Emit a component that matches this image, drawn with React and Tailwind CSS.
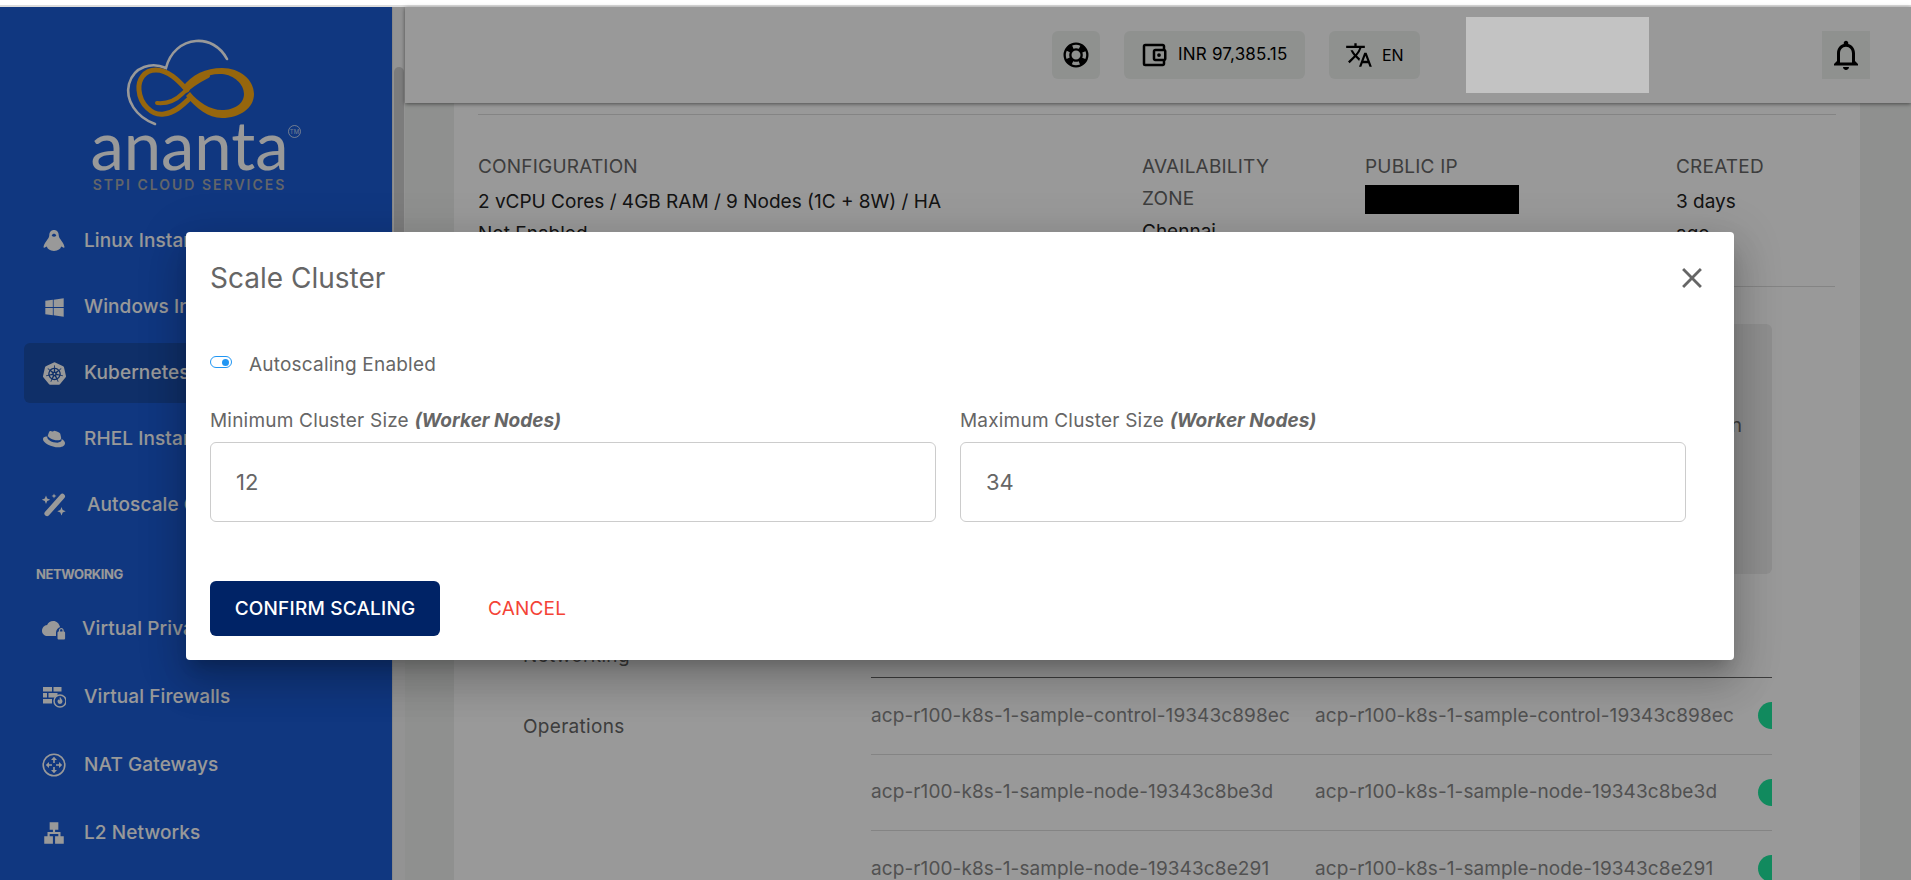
import React from 'react';
import { FaWindows, FaRedhat } from 'react-icons/fa';
import { SiKubernetes } from 'react-icons/si';
import {
  MdLan,
  MdOutlineAccountBalanceWallet,
  MdTranslate,
  MdOutlineNotifications,
  MdClose,
} from 'react-icons/md';

const PenguinIcon = () => (
  <svg viewBox="0 0 24 24" className="w-[24px] h-[24px]" fill="currentColor">
    <path d="M12 1c-3 0-4.600 2.300-4.700 5-.1 2-.8 3-1.900 4.600C4 12.700 1.800 15.500 1.500 18c-.1.8.5 1 1.300.6l2-1c.6 2.300 3 4.400 7.200 4.400s6.600-2.100 7.200-4.400l2 1c.8.4 1.400.2 1.300-.6-.3-2.500-2.500-5.300-3.900-7.400-1.100-1.600-1.800-2.600-1.900-4.600C16.600 3.300 15 1 12 1z" />
    <path d="M9.700 6.600c.5-1.200 1.400-1.800 2.300-1.800s1.800.6 2.300 1.800c-.6.800-1.400 1.200-2.300 1.200s-1.700-.4-2.300-1.200z" fill="#1c5dd5" />
  </svg>
);

const CloudLockIcon = () => (
  <svg viewBox="0 0 24 24" className="w-[24px] h-[24px]" fill="currentColor">
    <path d="M18 10c-.7-3.400-3.400-6-6.800-6-2.700 0-5 1.600-6.100 4C2.200 8.300 0 10.800 0 13.700 0 16.900 2.500 19 5.500 19H14v-3.500c0-2.600 2-4.700 4.300-5.500z" />
    <path d="M21.700 14.400v-1c0-1.400-1.100-2.400-2.400-2.400s-2.400 1-2.400 2.400v1c-.9 0-1.400.6-1.400 1.300v5.500c0 .9.600 1.300 1.300 1.300h5c.7 0 1.300-.5 1.300-1.300v-5.500c0-.7-.5-1.300-1.400-1.300zm-1.200 0h-2.400v-1c0-.7.5-1.200 1.200-1.200s1.200.5 1.200 1.200v1z" />
  </svg>
);

const FirewallIcon = () => (
  <svg viewBox="0 0 24 24" className="w-[24px] h-[24px]" fill="currentColor">
    <rect x="1" y="2" width="9" height="4.500" />
    <rect x="11.500" y="2" width="8" height="4.500" />
    <rect x="1" y="8" width="4" height="4.500" />
    <rect x="6.500" y="8" width="9" height="4.500" />
    <rect x="1" y="14" width="9" height="4.500" />
    <circle cx="18" cy="16" r="6" fill="#1c5dd5" stroke="currentColor" strokeWidth="1.500" />
    <path d="M18 11.500c.5 2 2.500 2.700 2.500 5a2.500 2.500 0 0 1-5 0c0-1 .5-1.600 1-2.200.200.700.500 1 1 1.200.300-1.300 0-2.500.5-4z" />
  </svg>
);

const GatewayIcon = () => (
  <svg viewBox="0 0 24 24" className="w-[24px] h-[24px]" fill="currentColor">
    <circle cx="12" cy="12" r="10.800" fill="none" stroke="currentColor" strokeWidth="1.600" />
    <path d="M12 3.800l3 3.200h-2.200v3h-1.600V7H9zM12 20.200l-3-3.200h2.200v-3h1.600v3H15zM3.800 12L7 9v2.200h3v1.600H7V15zM20.200 12L17 15v-2.200h-3v-1.600h3V9z" />
  </svg>
);

const WandIcon = () => (
  <svg viewBox="0 0 26 26" className="w-[26px] h-[26px]" fill="currentColor">
    <path d="M19.500 2.500a2.600 2.600 0 0 1 3.700 3.700L8 23.300a2.600 2.600 0 0 1-3.900-3.500z" />
    <path d="M5 3.500l1.200 3 3 1.200-3 1.200-1.200 3-1.200-3-3-1.200 3-1.200zM13 1.500l.7 1.800 1.800.7-1.800.7-.7 1.800-.7-1.800-1.800-.7 1.800-.7zM20.500 15l1.200 3 3 1.200-3 1.200-1.200 3-1.200-3-3-1.200 3-1.200z" />
  </svg>
);

const LifebuoyIcon = () => (
  <svg viewBox="0 0 26 26" className="w-[26px] h-[26px]" fill="none">
    <circle cx="13" cy="13" r="8.500" stroke="#000000" strokeWidth="8" />
    <circle cx="13" cy="13" r="8.500" stroke="#eff2ef" strokeWidth="3.400" strokeDasharray="7 6.350" strokeDashoffset="3.500" />
  </svg>
);

const AnantaMark = () => (
  <svg viewBox="0 0 140 90" className="w-[140px] h-[90px]" fill="none">
    <path
      d="M107 21C100 8 88 2 76 3 62 4 50 14 46 30 32 24 14 28 9 46 5 62 16 79 35 86"
      stroke="#ffffff"
      strokeWidth="2.600"
      strokeLinecap="round"
    />
    <path
      d="M67 52C58 42 48 32 36 32 24 32 18 42 19 52 20 66 32 78 44 76 54 75 62 68 70 60"
      stroke="#fbaa16"
      strokeWidth="5"
      strokeLinecap="round"
    />
    <path
      fillRule="evenodd"
      fill="#fbaa16"
      d="M62 50C72 36 86 30 102 30 120 30 134 42 134 56 134 70 120 80 102 80 88 80 76 70 66 58L70 54C78 64 90 72 102 72 114 72 124 66 124 56 124 46 114 37 102 36 88 35 76 42 68 54z"
    />
    <path
      d="M37 65C48 66 56 62 62 56 68 50 76 44 88 38"
      stroke="#fbaa16"
      strokeWidth="4"
      strokeLinecap="round"
    />
  </svg>
);

const topItems = [
  { label: 'Linux Instances', icon: <PenguinIcon /> },
  { label: 'Windows Instances', icon: <FaWindows className="text-[21px]" /> },
  { label: 'Kubernetes', icon: <SiKubernetes className="text-[23px]" />, active: true },
  { label: 'RHEL Instances', icon: <FaRedhat className="text-[22px]" /> },
  { label: 'Autoscale Groups', icon: <WandIcon />, textClass: 'ml-[3px]' },
];

const networkItems = [
  { label: 'Virtual Private Cloud', icon: <CloudLockIcon />, textClass: 'ml-[-2px]' },
  { label: 'Virtual Firewalls', icon: <FirewallIcon /> },
  { label: 'NAT Gateways', icon: <GatewayIcon /> },
  { label: 'L2 Networks', icon: <MdLan className="text-[26px]" /> },
];

const nodes = [
  'acp-r100-k8s-1-sample-control-19343c898ec',
  'acp-r100-k8s-1-sample-node-19343c8be3d',
  'acp-r100-k8s-1-sample-node-19343c8e291',
];

const NavRow = ({ item, className }) => (
  <div
    className={`mx-6 h-[60px] px-4 flex items-center gap-4 rounded-md whitespace-nowrap text-[19px] tracking-[0.1px] font-medium text-white ${
      item.active ? 'bg-[#1a4fad]' : ''
    } ${className}`}
  >
    <span className="w-7 flex justify-center shrink-0">{item.icon}</span>
    <span className={item.textClass}>{item.label}</span>
  </div>
);

const Sidebar = () => (
  <aside className="w-[392px] shrink-0 bg-[#1c5dd5] overflow-hidden">
    <div className="h-[204px] pt-[31px] pr-[13px] flex flex-col items-center relative">
      <AnantaMark />
      <div className="font-['Lato',sans-serif] text-[67px] leading-[40px] mt-[-4px] text-white font-normal">ananta</div>
      <div className="text-[14px] leading-[16px] mt-[13px] font-semibold tracking-[2px] text-[#a4a8b0] whitespace-nowrap">
        STPI CLOUD SERVICES
      </div>
      <span className="absolute left-[288px] top-[118px] w-[13px] h-[13px] rounded-full border border-white/70 text-white/70 text-[6px] leading-[11px] text-center">
        TM
      </span>
    </div>
    {topItems.map((item) => (
      <NavRow key={item.label} item={item} className="mb-[6px]" />
    ))}
    <div className="h-[58px] pl-9 pt-[23px] text-[13px] leading-[20px] font-bold tracking-[-0.4px] text-white">NETWORKING</div>
    {networkItems.map((item) => (
      <NavRow key={item.label} item={item} className="mb-2" />
    ))}
  </aside>
);

const Scrollbar = () => (
  <div className="w-[13px] shrink-0 bg-[#f6f6f6] border-l border-[#e4e4e4] pt-[60px] px-[1px]">
    <div className="h-[420px] rounded-full bg-[#cfcfcf]" />
  </div>
);

const Tile = ({ className, children }) => (
  <div className={`h-12 rounded-md bg-[#eff2ef] flex items-center ${className}`}>{children}</div>
);

const Header = () => (
  <header className="relative z-10 h-[96px] shrink-0 bg-white shadow-[0_1px_4px_rgba(0,0,0,0.5)] flex items-center text-black">
    <div className="ml-[647px] flex items-center">
      <Tile className="w-12 justify-center">
        <LifebuoyIcon />
      </Tile>
      <Tile className="w-[181px] ml-6 pl-[15px] gap-[9px] text-[17px] tracking-[0.2px]">
        <MdOutlineAccountBalanceWallet className="text-[30px]" />
        <span>INR 97,385.15</span>
      </Tile>
      <Tile className="w-[91px] ml-6 pl-[16px] gap-[9px] text-[16px]">
        <MdTranslate className="text-[28px]" />
        <span>EN</span>
      </Tile>
      <Tile className="w-12 ml-[402px] rounded-none justify-center">
        <MdOutlineNotifications className="text-[36px]" />
      </Tile>
    </div>
  </header>
);

const SummaryColumn = ({ className, label, lines, linesClass = 'mt-[3px]' }) => (
  <div className={`${className} text-[19px] whitespace-nowrap`}>
    {label.map((text) => (
      <div key={text} className="text-[#666] tracking-[0.2px] leading-[32px]">
        {text}
      </div>
    ))}
    <div className={`${linesClass} leading-[32px] text-[#222]`}>
      {lines.map((text) => (
        <div key={text}>{text}</div>
      ))}
    </div>
  </div>
);

const Content = () => (
  <div className="flex-1 min-h-0 overflow-hidden pl-[49px] pr-[51px]">
    <div className="h-full bg-white px-6">
      <div className="h-[12px] border-b border-[#ddd]" />
      <div className="flex pt-[36px] h-[172px] border-b border-[#ddd] w-[1357px] overflow-hidden">
        <SummaryColumn className="w-[664px]" label={['CONFIGURATION']} lines={['2 vCPU Cores / 4GB RAM / 9 Nodes (1C + 8W) / HA', 'Not Enabled']} />
        <SummaryColumn className="w-[223px]" label={['AVAILABILITY', 'ZONE']} lines={['Chennai']} linesClass="mt-[1px]" />
        <div className="w-[311px] text-[19px] tracking-[0.2px] leading-[32px] text-[#666]">
          PUBLIC IP
          <div className="w-[154px] h-[29px] bg-black mt-[2px]" />
        </div>
        <SummaryColumn className="w-[150px]" label={['CREATED']} lines={['3 days', 'ago']} />
      </div>
      <div className="flex mt-[37px]">
        <div className="w-[393px] pl-[45px] shrink-0 text-[19px] tracking-[0.3px] text-[#666]">
          <div className="mt-[318px] leading-[28px]">Networking</div>
          <div className="mt-[43px] leading-[28px]">Operations</div>
        </div>
        <div className="w-[901px] shrink-0 overflow-hidden">
          <div className="h-[250px] rounded-md bg-[#eeeeee] flex justify-end pt-[88px] pr-[30px] text-[19px] text-[#666]">Version</div>
          <div className="h-[104px] border-b border-[#666]" />
          {nodes.map((node) => (
            <div key={node} className="h-[76.5px] border-b border-[#ddd] flex items-center text-[19px] tracking-[0.1px] text-[#888] whitespace-nowrap relative">
              <span className="w-[444px] shrink-0">{node}</span>
              <span>{node}</span>
              <span className="absolute left-[887px] top-[24px] w-[60px] h-[27px] rounded-full bg-[#1de69d]" />
            </div>
          ))}
        </div>
      </div>
    </div>
  </div>
);

const ScaleDialog = () => (
  <div className="absolute left-[186px] top-[225px] w-[1548px] h-[428px] bg-white rounded p-6 text-[#666] shadow-[0_11px_15px_-7px_rgba(0,0,0,0.2),0_24px_38px_3px_rgba(0,0,0,0.14),0_9px_46px_8px_rgba(0,0,0,0.12)]">
    <div className="flex items-center justify-between h-[44px]">
      <h2 className="text-[28px] font-normal">Scale Cluster</h2>
      <MdClose className="text-[34px] mr-[1px] text-[#666]" />
    </div>
    <div className="flex items-center mt-[53px] h-[24px]">
      <span className="w-[22px] h-[12px] rounded-full border-[1.5px] border-[#2196f3] flex items-center justify-end pr-[2px] mt-[-6px]">
        <span className="w-[7px] h-[7px] rounded-full bg-[#2196f3]" />
      </span>
      <span className="ml-[17px] text-[19px] tracking-[0.2px]">Autoscaling Enabled</span>
    </div>
    <div className="flex gap-6 mt-[32px] w-[1476px]">
      {[
        { label: 'Minimum Cluster Size', value: '12' },
        { label: 'Maximum Cluster Size', value: '34' },
      ].map((field) => (
        <label key={field.label} className="w-[726px] block">
          <span className="block text-[19px] tracking-[0.2px] leading-[24px] whitespace-nowrap">
            {field.label} <em className="font-bold tracking-normal">(Worker Nodes)</em>
          </span>
          <input
            readOnly
            value={field.value}
            className="mt-[9px] w-full h-[80px] px-[25px] border border-[#ccc] rounded-md text-[22px] text-[#666] outline-none"
          />
        </label>
      ))}
    </div>
    <div className="flex items-center mt-[59px]">
      <button className="w-[230px] h-[55px] pt-[2px] rounded-md bg-[#002366] text-white text-[19px] tracking-[0.2px] font-medium">CONFIRM SCALING</button>
      <button className="ml-12 pt-[2px] text-[19px] tracking-[0.2px] text-[#f44336]">CANCEL</button>
    </div>
  </div>
);

export default function App() {
  return (
    <div className="h-[880px] overflow-hidden flex flex-col bg-white font-['Inter',sans-serif]">
      <div className="h-[7px] shrink-0 bg-white border-b-2 border-[#dcdcdc]" />
      <div className="relative flex-1 min-h-0 flex">
        <Sidebar />
        <Scrollbar />
        <main className="flex-1 min-w-0 flex flex-col bg-[#eef1ee]">
          <Header />
          <Content />
        </main>
        <div className="absolute inset-0 z-20 bg-black/40" />
        <div className="absolute inset-0 z-30 pointer-events-none">
          {/* masked out block over the account name */}
          <div className="absolute left-[1466px] top-[10px] w-[183px] h-[76px] bg-[#c3c3c3]" />
          <ScaleDialog />
        </div>
      </div>
    </div>
  );
}
